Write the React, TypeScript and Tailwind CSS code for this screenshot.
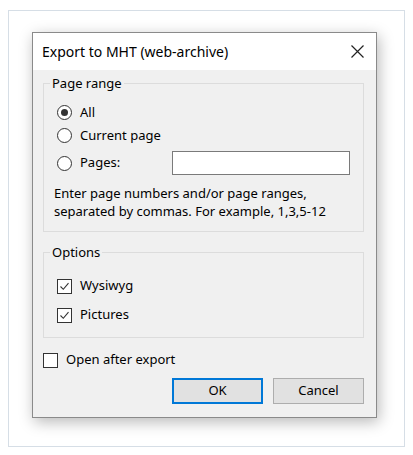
import React from "react";

const font = { fontFamily: '"Noto Sans", "Open Sans", sans-serif' };

function Radio({ checked }: { checked?: boolean }) {
  return (
    <span className="flex h-[15px] w-[15px] shrink-0 items-center justify-center rounded-full border border-[#333333] bg-white">
      {checked && <span className="h-[7px] w-[7px] rounded-full bg-[#333333]" />}
    </span>
  );
}

function Check({ checked }: { checked?: boolean }) {
  return (
    <span className="flex h-[15px] w-[15px] shrink-0 items-center justify-center border border-[#333333] bg-white">
      {checked && (
        <svg width="11" height="11" viewBox="0 0 11 11">
          <path d="M1.5 5.5 L4.3 8.3 L9.5 2.2" fill="none" stroke="#333333" strokeWidth="1.1" />
        </svg>
      )}
    </span>
  );
}

export default function App() {
  return (
    <div className="h-[455px] w-[413px] bg-white pl-[8px] pt-[10px] text-[13px] text-black" style={font}>
      <div className="h-[437px] w-[397px] border border-[#d6dee6] bg-white pl-[23px] pt-[21px]">
        <div className="flex h-[386px] w-[345px] flex-col border border-[#8a8a8a] bg-[#f0f0f0] shadow-[2px_4px_14px_rgba(0,0,0,0.28)]">
          <div className="flex h-[37px] shrink-0 items-center justify-between bg-white pl-[9px] pr-[12px]">
            <span className="text-[14px] leading-[18px]">Export to MHT (web-archive)</span>
            <svg width="13" height="13" viewBox="0 0 13 13">
              <path d="M0.5 0.5 L12.5 12.5 M12.5 0.5 L0.5 12.5" stroke="#222" strokeWidth="1.2" />
            </svg>
          </div>
          <div className="flex flex-1 flex-col pl-[10px] pr-[12px] pt-[5px]">
            <fieldset className="border border-[#dcdcdc] pb-[11px]">
              <legend className="ml-[6px] px-[2px] leading-[17px]">Page range</legend>
              <div className="pl-[13px] pr-[13px] pt-[9px]">
                <div className="flex h-[23px] items-center gap-[8px]">
                  <Radio checked />
                  <span>All</span>
                </div>
                <div className="flex h-[23px] items-center gap-[8px]">
                  <Radio />
                  <span>Current page</span>
                </div>
                <div className="mt-[4px] flex h-[24px] items-center">
                  <Radio />
                  <span className="ml-[8px] w-[92px]">Pages:</span>
                  <div className="h-[24px] flex-1 border border-[#7a7a7a] bg-white" />
                </div>
              </div>
              <div className="mt-[9px] pl-[10px] leading-[18px]">
                <div>Enter page numbers and/or page ranges,</div>
                <div>separated by commas. For example, 1,3,5-12</div>
              </div>
            </fieldset>
            <fieldset className="mt-[12px] border border-[#dcdcdc] pb-[10px]">
              <legend className="ml-[6px] px-[2px] leading-[17px]">Options</legend>
              <div className="pl-[13px] pt-[13px]">
                <div className="flex h-[24px] items-center gap-[8px]">
                  <Check checked />
                  <span>Wysiwyg</span>
                </div>
                <div className="mt-[5px] flex h-[24px] items-center gap-[8px]">
                  <Check checked />
                  <span>Pictures</span>
                </div>
              </div>
            </fieldset>
            <div className="mt-[10px] flex h-[24px] items-center gap-[8px]">
              <Check />
              <span>Open after export</span>
            </div>
            <div className="mt-[6px] flex justify-end gap-[10px]">
              <div className="flex h-[26px] w-[91px] items-center justify-center border-2 border-[#0078d7] bg-[#e1e1e1]">OK</div>
              <div className="flex h-[26px] w-[91px] items-center justify-center border border-[#adadad] bg-[#e1e1e1]">Cancel</div>
            </div>
          </div>
        </div>
      </div>
    </div>
  );
}
